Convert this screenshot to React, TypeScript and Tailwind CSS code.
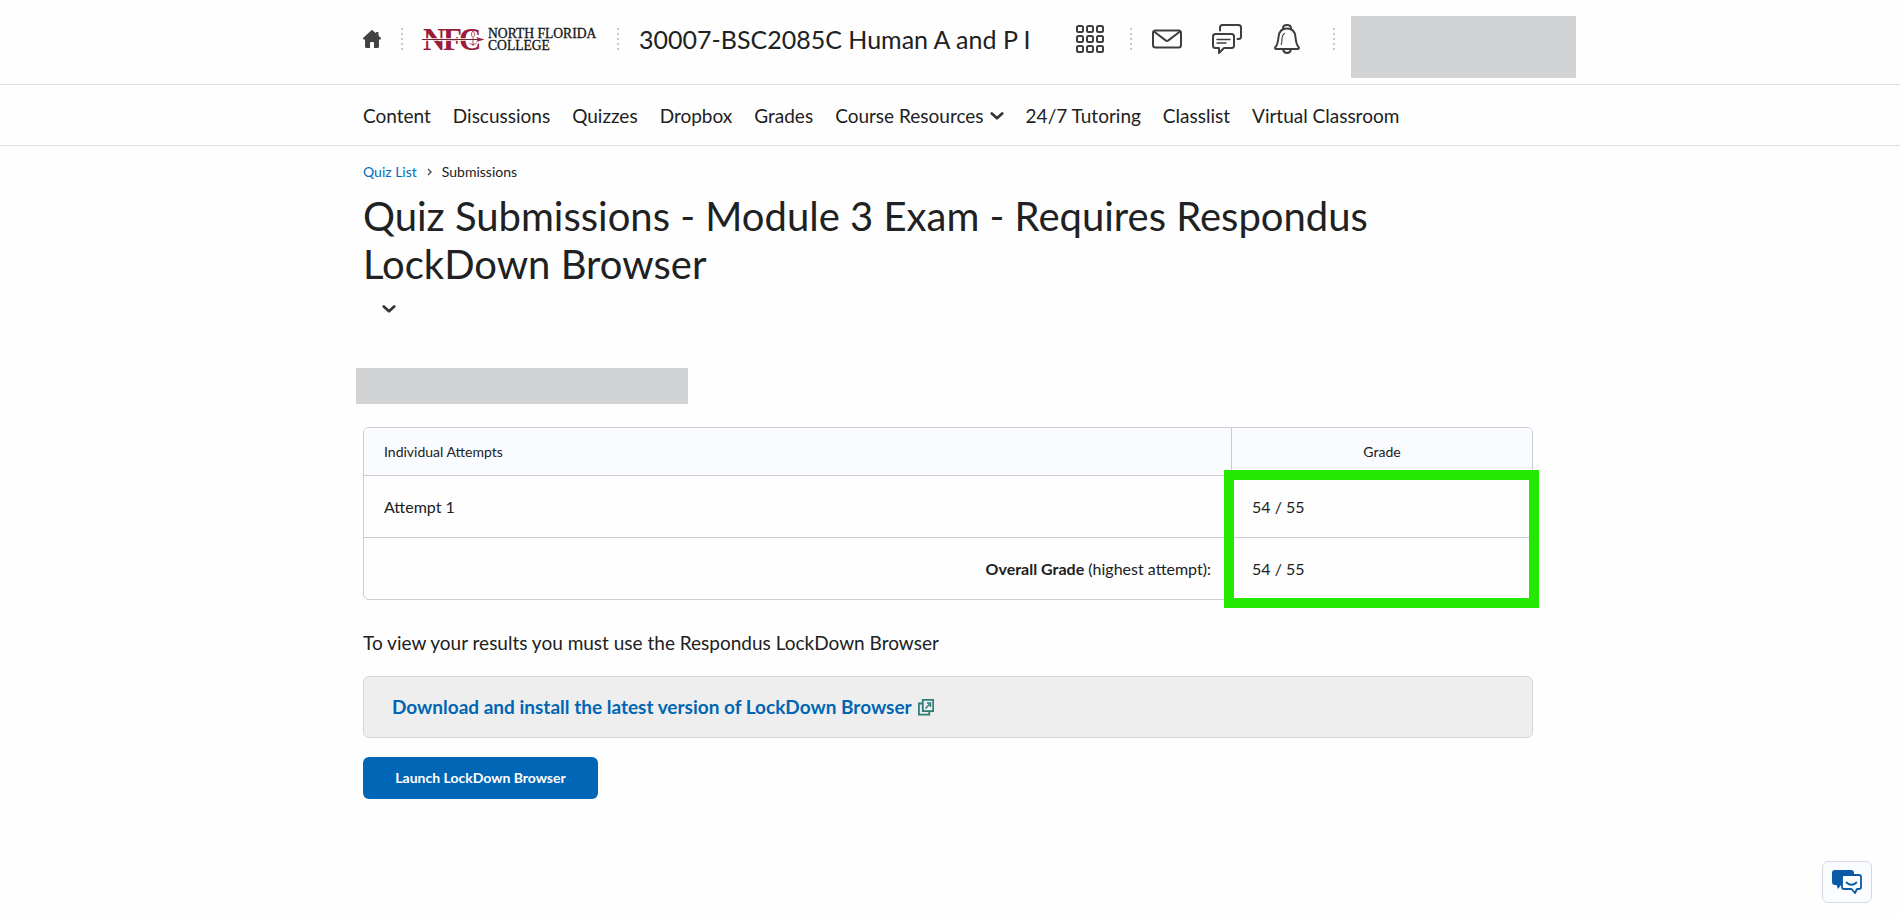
import type { ReactNode } from "react";

function Separator() {
  return (
    <span aria-hidden="true" className="flex w-0.5 shrink-0 flex-col gap-[3px]">
      {[0, 1, 2, 3, 4].map((dot) => (
        <span key={dot} className="h-0.5 w-0.5 bg-[#c3c8cd]" />
      ))}
    </span>
  );
}

function IconButton({ label, children }: { label: string; children: ReactNode }) {
  return (
    <button type="button" aria-label={label} className="flex w-[30px] shrink-0 items-center justify-center">
      {children}
    </button>
  );
}

function HomeIcon() {
  return (
    <svg width="18" height="18" viewBox="0 0 18 18" fill="#414345" aria-hidden="true">
      <path d="M8.2.4a1.2 1.2 0 0 1 1.6 0L13 3.2V2.600q0-.6.600-.6h1.300q.6 0 .6.600v2.900l2.200 2.300q.5.600.2 1.100-.3.500-.9.500H16v7.100q0 1.500-1.500 1.500H11v-5q0-1-1-1H8q-1 0-1 1v5H3.500Q2 18 2 16.500V9.400H1q-.6 0-.9-.5-.2-.6.200-1.100z" />
    </svg>
  );
}

function Logo() {
  return (
    <svg width="174" height="30" viewBox="0 -2 174 30" className="overflow-visible" role="img" aria-label="North Florida College">
      <g fontFamily="Liberation Serif, serif" fontSize="31" fontWeight="700" fill="#9b1b3b">
        <text x="0" y="24">N</text>
        <text x="20" y="24">F</text>
        <text x="36" y="24">C</text>
      </g>
      <path d="M0 13.500h46" stroke="#fff" strokeWidth="2.600" />
      <path d="M-1 13.500h56" stroke="#6b2638" strokeWidth="1.200" />
      <path d="M53 11l8.500 2.500L53 16l2-2.500z" fill="#8d2440" />
      <path d="M50 5c-2.200 2.500-2.200 4 0 6.500 2.200-2.500 2.200-4 0-6.500z" fill="#fff" stroke="#9b1b3b" strokeWidth=".8" />
      <path d="M46.500 17c2 2 5 2 7 0M50 12v8" fill="none" stroke="#9b1b3b" strokeWidth=".8" />
      <g fontFamily="Liberation Serif, serif" fontSize="13.600" fill="#151515" stroke="#151515" strokeWidth=".3">
        <text x="65" y="12">NORTH FLORIDA</text>
        <text x="65" y="24">COLLEGE</text>
      </g>
    </svg>
  );
}

function GridIcon() {
  const steps = [1, 11, 21];
  return (
    <svg width="28" height="28" viewBox="0 0 28 28" fill="none" stroke="#3c3e40" strokeWidth="2" aria-hidden="true">
      {steps.map((y) => steps.map((x) => <rect key={`${x}-${y}`} x={x} y={y} width="6" height="6" rx="1.500" />))}
    </svg>
  );
}

function MailIcon() {
  return (
    <svg width="30" height="20" viewBox="0 0 30 20" fill="none" stroke="#3c3e40" strokeWidth="2" strokeLinejoin="round" aria-hidden="true">
      <rect x="1" y="1.500" width="28" height="17" rx="2.500" />
      <path d="M2 2.500l11.600 8.900q1.400 1 2.800 0L28 2.500" />
    </svg>
  );
}

function ChatIcon() {
  return (
    <svg width="30" height="30" viewBox="0 0 30 30" fill="none" stroke="#3c3e40" strokeWidth="2" strokeLinecap="round" strokeLinejoin="round" aria-hidden="true">
      <path d="M8 6.500V3.500Q8 1 10.500 1h16Q29 1 29 3.500v9q0 2.500-2.500 2.500h-1" />
      <path d="M3.500 10h16q2.500 0 2.500 2.500v9q0 2.500-2.500 2.500H12l-5 5v-5H3.500Q1 24 1 21.500v-9Q1 10 3.500 10z" />
      <path d="M5 15.500h13M5 19h9" strokeWidth="1.300" />
    </svg>
  );
}

function BellIcon() {
  return (
    <svg width="26" height="30" viewBox="0 0 26 30" fill="none" stroke="#3c3e40" strokeWidth="2" strokeLinecap="round" strokeLinejoin="round" aria-hidden="true">
      <path d="M9 5V4q0-3 4-3t4 3v1" />
      <path d="M13 4.500c-5 0-8 3-8.500 8.500-.4 5-.8 7.500-3 10-.8.900-.5 2 .5 2h22c1 0 1.300-1.100.5-2-2.200-2.500-2.600-5-3-10C21 7.500 18 4.500 13 4.500z" />
      <path d="M9 25.500q.8 3.500 4 3.500t4-3.500" />
      <path d="M10.500 9.500Q8 11 8 15.500q0 3-.8 5" strokeWidth="1.100" />
    </svg>
  );
}

function Chevron() {
  return (
    <svg width="14" height="10" viewBox="0 0 14 10" fill="none" stroke="#303234" strokeWidth="2.600" strokeLinecap="round" strokeLinejoin="round" aria-hidden="true">
      <path d="M1.800 2.500L7 7.300l5.200-4.800" />
    </svg>
  );
}

function NewWindowIcon() {
  return (
    <svg width="16" height="18" viewBox="0 0 16 18" fill="none" stroke="#2f7d78" strokeWidth="1.800" aria-hidden="true">
      <path d="M4.800 1.800h10.400v11.400H4.800z" />
      <path d="M4.500 5.500H.9v11.200h10.400v-3.200" />
      <path d="M7.500 10.500l4.800-5M8.800 5h3.700v4" strokeWidth="1.400" />
    </svg>
  );
}

const links = ["Content", "Discussions", "Quizzes", "Dropbox", "Grades"];
const moreLinks = ["24/7 Tutoring", "Classlist", "Virtual Classroom"];

export default function App() {
  return (
    <div className="min-h-screen bg-[#fefefe] font-['Lato',sans-serif] text-[#202122]">
      <header>
        <div className="border-b border-[#dcdfe2] pr-1">
          <div className="mx-auto flex h-21 max-w-[1170px] items-center">
            <div className="flex w-full items-center pb-1.5">
              <a href="#home" aria-label="My Home" className="shrink-0">
                <HomeIcon />
              </a>
              <div className="ml-5 flex items-center gap-5">
                <Separator />
                <a href="#college" className="shrink-0">
                  <Logo />
                </a>
                <Separator />
              </div>
              <a href="#course" className="ml-5 flex-1 text-[25px] leading-8 whitespace-nowrap">
                30007-BSC2085C Human A and P I
              </a>
              <IconButton label="Select a course">
                <GridIcon />
              </IconButton>
              <div className="mr-5 ml-[25px] flex">
                <Separator />
              </div>
              <div className="mr-[31px] flex items-center gap-[30px]">
                <IconButton label="Message alerts">
                  <MailIcon />
                </IconButton>
                <IconButton label="Subscription alerts">
                  <ChatIcon />
                </IconButton>
                <IconButton label="Update alerts">
                  <BellIcon />
                </IconButton>
              </div>
              <Separator />
            </div>
            <div className="-mr-[43px] mb-1.5 ml-4 h-[62px] w-[225px] shrink-0 self-end bg-[#d2d3d4]" />
          </div>
        </div>
        <div className="border-b border-[#dcdfe2] pr-1">
          <nav className="mx-auto flex h-15 max-w-[1170px] items-center gap-[22px] pt-0.5 text-[19px] leading-6 whitespace-nowrap">
            {links.map((label) => (
              <a key={label} href={`#${label.toLowerCase()}`}>
                {label}
              </a>
            ))}
            <button type="button" className="flex items-center gap-1.5">
              Course Resources
              <Chevron />
            </button>
            {moreLinks.map((label) => (
              <a key={label} href={`#${label.toLowerCase().replace(/\W/g, "-")}`}>
                {label}
              </a>
            ))}
          </nav>
        </div>
      </header>

      <main className="pr-1">
        <div className="mx-auto max-w-[1170px] pt-4">
          <nav aria-label="Breadcrumb" className="flex items-center gap-[9px] text-sm leading-5">
            <a href="#quizzes" className="text-[#006fbf]">
              Quiz List
            </a>
            <svg width="7" height="8" viewBox="0 0 7 8" fill="none" stroke="#494c4e" strokeWidth="1.400" aria-hidden="true">
              <path d="M2 1l3 3-3 3" />
            </svg>
            <span>Submissions</span>
          </nav>
          <h1 className="mt-2.5 text-[40px] leading-12">
            Quiz Submissions - Module 3 Exam - Requires Respondus LockDown Browser
          </h1>
          <button type="button" aria-label="Quiz actions" className="ml-1 flex h-[42px] w-11 items-center justify-center">
            <Chevron />
          </button>
          <div className="mt-[38px] -ml-[7px] h-9 w-[332px] bg-[#d2d3d4]" />

          <div className="relative mt-[23px]">
            <table className="w-full table-fixed border-separate border-spacing-0 overflow-hidden rounded-md border border-[#c9cdd1] text-left text-base leading-6">
              <thead className="bg-[#f9fbff] text-sm">
                <tr className="h-12">
                  <th className="border-b border-[#c9cdd1] px-5 font-normal">Individual Attempts</th>
                  <th className="w-[301px] border-b border-l border-[#c9cdd1] px-5 text-center font-normal">Grade</th>
                </tr>
              </thead>
              <tbody>
                <tr className="h-[62px]">
                  <td className="border-b border-[#c9cdd1] px-5">Attempt 1</td>
                  <td className="border-b border-l border-[#c9cdd1] px-5">54 / 55</td>
                </tr>
                <tr className="h-[61px]">
                  <td className="px-5 text-right">
                    <strong>Overall Grade</strong> (highest attempt):
                  </td>
                  <td className="border-l border-[#c9cdd1] px-5">54 / 55</td>
                </tr>
              </tbody>
            </table>
            <div className="pointer-events-none absolute -right-1.5 -bottom-2 h-[138px] w-[315px] border-10 border-[#25e800]" />
          </div>

          <p className="mt-[30px] text-[19px] leading-[26px]">
            To view your results you must use the Respondus LockDown Browser
          </p>
          <div className="mt-5 flex h-[62px] items-center rounded-md border border-[#d3d6d9] bg-[#eeeeee] px-7">
            <a href="#download" className="flex items-center gap-1.5 text-[19px] leading-6 font-bold text-[#0066b3]">
              Download and install the latest version of LockDown Browser
              <NewWindowIcon />
            </a>
          </div>
          <button type="button" className="mt-[19px] h-[42px] min-w-[235px] rounded-md bg-[#0066b5] px-7 text-sm font-bold text-white">
            Launch LockDown Browser
          </button>
        </div>
      </main>

      <button
        type="button"
        aria-label="Open chat"
        className="fixed right-7 bottom-3 flex h-[42px] w-[50px] items-center justify-center rounded-md border border-[#d3d9e3] bg-[#fafcff]"
      >
        <svg width="30" height="24" viewBox="0 0 30 24" aria-hidden="true">
          <path d="M3 0h16q3 0 3 3v12H9l-3 4-1.500-4H3q-3 0-3-3V3q0-3 3-3z" fill="#0a5aa6" />
          <path d="M12 5h15q2 0 2 2v10q0 2-2 2h-2l-2 4-3.500-4H12q-2 0-2-2V7q0-2 2-2z" fill="#fff" stroke="#0a5aa6" strokeWidth="1.800" strokeLinejoin="round" />
          <path d="M14.500 12.500q5 4.500 10 0" fill="none" stroke="#0a5aa6" strokeWidth="1.800" strokeLinecap="round" />
        </svg>
      </button>
    </div>
  );
}
